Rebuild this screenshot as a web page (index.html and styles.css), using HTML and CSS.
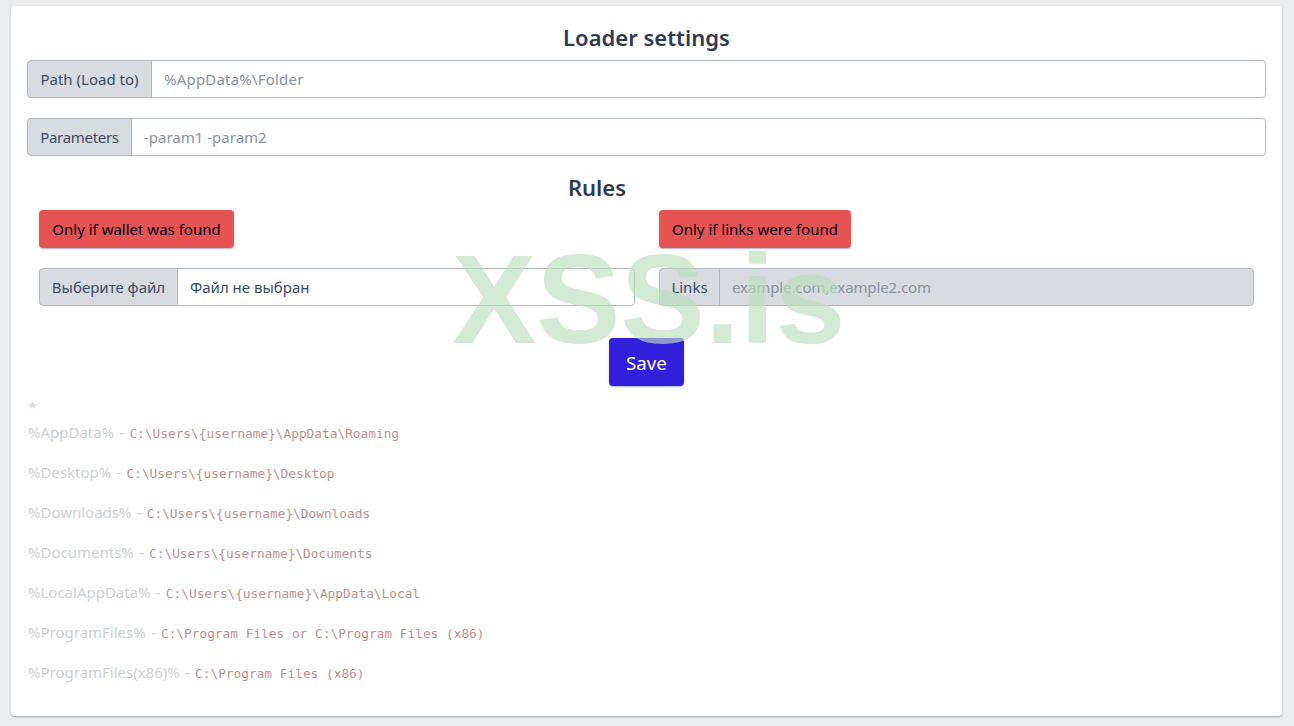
FILE: index.html
```html
<!DOCTYPE html>
<html lang="en">
<head>
<meta charset="utf-8">
<title>Loader settings</title>
<link rel="stylesheet" href="styles.css">
</head>
<body>
<main class="card">
  <h4 class="title title-main">Loader settings</h4>
  <div class="group">
    <span class="addon addon-path">Path (Load to)</span>
    <input class="control control-path" type="text" placeholder="%AppData%\Folder">
  </div>
  <div class="group">
    <span class="addon addon-params">Parameters</span>
    <input class="control" type="text" placeholder="-param1 -param2">
  </div>
  <h4 class="title title-rules">Rules</h4>
  <div class="rules">
    <div class="rule">
      <button class="btn btn-danger btn-wallet" type="button">Only if wallet was found</button>
      <div class="group group-flat">
        <span class="addon addon-file">Выберите файл</span>
        <span class="control file-name">Файл не выбран</span>
      </div>
    </div>
    <div class="rule">
      <button class="btn btn-danger" type="button">Only if links were found</button>
      <div class="group group-flat">
        <span class="addon addon-links">Links</span>
        <input class="control control-disabled" type="text" placeholder="example.com,example2.com" disabled>
      </div>
    </div>
  </div>
  <div class="save-row">
    <button class="btn btn-save" type="button">Save</button>
  </div>
  <div class="notes">
    <p class="star">*</p>
    <p>%AppData% - <code>C:\Users\{username}\AppData\Roaming</code></p>
    <p>%Desktop% - <code>C:\Users\{username}\Desktop</code></p>
    <p>%Downloads% - <code>C:\Users\{username}\Downloads</code></p>
    <p>%Documents% - <code>C:\Users\{username}\Documents</code></p>
    <p>%LocalAppData% - <code>C:\Users\{username}\AppData\Local</code></p>
    <p>%ProgramFiles% - <code>C:\Program Files or C:\Program Files (x86)</code></p>
    <p>%ProgramFiles(x86)% - <code>C:\Program Files (x86)</code></p>
  </div>
</main>
<div class="watermark">XSS.is</div>
</body>
</html>
```
FILE: styles.css
```css
* { box-sizing: border-box; }
html, body { height: 100%; }
body {
  margin: 0;
  padding: 6px 12px 10px 11px;
  background: #ebedef;
  color: #3c4b64;
  font-family: "Noto Sans", "Open Sans", sans-serif;
  font-size: 15px;
  line-height: 24px;
  overflow: hidden;
}
.card {
  height: 710px;
  padding: 16px;
  background: #fff;
  border-radius: 4px;
  box-shadow: 0 1px 1px 0 rgba(60,75,100,.14), 0 2px 1px -1px rgba(60,75,100,.12), 0 1px 3px 0 rgba(60,75,100,.2);
}
.title {
  margin: 0 0 9px;
  height: 29px;
  color: #2f3b50;
  font-size: 22px;
  font-weight: 600;
  line-height: 29px;
  text-align: center;
}
.title-main { line-height: 31px; }
.title-rules {
  margin: -3px 99px 8px 0;
}
.group {
  display: flex;
  height: 38px;
  margin-bottom: 20px;
}
.group-flat { margin-bottom: 0; }
.addon {
  display: flex;
  align-items: center;
  justify-content: center;
  padding: 0 12px;
  background: #d8dbe0;
  border: 1px solid #b1b7c1;
  border-radius: 4px 0 0 4px;
  white-space: nowrap;
}
.addon-path { width: 125px; padding: 0; }
.addon-params { width: 105px; padding: 0; letter-spacing: -.3px; }
.addon-file { width: 139px; padding: 0; }
.addon-links { width: 61px; padding: 0; }
.control {
  flex: 1;
  min-width: 0;
  margin-left: -1px;
  padding: 0 12px;
  background: #fff;
  border: 1px solid #b1b7c1;
  border-radius: 0 4px 4px 0;
  color: #3c4b64;
  font: inherit;
  outline: none;
}
.control::placeholder { color: #8a93a2; opacity: 1; }
.control-path { letter-spacing: .2px; }
.control-disabled { background: #d8dbe0; letter-spacing: -.1px; }
.file-name { display: flex; align-items: center; }
.rules {
  display: grid;
  grid-template-columns: 596px 595px;
  gap: 24px;
  padding: 0 12px;
}
.rule {
  display: flex;
  flex-direction: column;
  align-items: flex-start;
  gap: 20px;
}
.rule .group { align-self: stretch; }
.btn {
  border: 1px solid transparent;
  border-radius: 4px;
  font: inherit;
  box-shadow: 0 1px 1px 0 rgba(60,75,100,.14), 0 2px 1px -1px rgba(60,75,100,.12), 0 1px 3px 0 rgba(60,75,100,.2);
}
.btn-danger {
  height: 38px;
  padding: 0 12px;
  background: #e55353;
  color: #000015;
}
.btn-wallet { width: 195px; }
.save-row {
  display: flex;
  justify-content: center;
  margin-top: 32px;
}
.btn-save {
  height: 48px;
  padding: 2px 16px 0;
  background: #321fdb;
  color: #fff;
  font-size: 18.75px;
}
.notes {
  margin-top: 9px;
  padding-left: 1px;
  color: #cdd1d4;
  word-spacing: 1.3px;
}
.notes p { margin: 0 0 16px; }
.notes .star { margin-bottom: 1px; }
code {
  color: #c08f90;
  font-family: "DejaVu Sans Mono", monospace;
  font-size: 12.8px;
  line-height: 1;
  word-spacing: 0;
}
.watermark {
  position: absolute;
  left: 452px;
  top: 225px;
  color: #bcdfc0;
  opacity: .65;
  font-family: "Liberation Sans", Arial, sans-serif;
  font-size: 126.4px;
  font-weight: 700;
  line-height: 150px;
  pointer-events: none;
  white-space: nowrap;
}
```
